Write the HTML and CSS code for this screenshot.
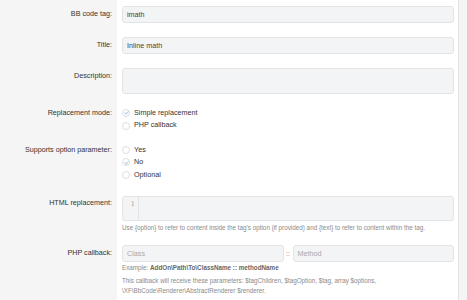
FILE: index.html
```html
<!DOCTYPE html>
<html lang="en">
  <head>
    <meta charset="UTF-8" />
    <title>Edit BB code</title>
    <link rel="stylesheet" href="styles.css">
  </head>
  <body>
    <div class="form">
      <div class="row">
        <div class="label">BB code tag:</div>
        <div class="ctrl"><div class="input">imath</div></div>
      </div>
      <div class="row">
        <div class="label">Title:</div>
        <div class="ctrl"><div class="input">Inline math</div></div>
      </div>
      <div class="row">
        <div class="label">Description:</div>
        <div class="ctrl"><div class="input textarea"></div></div>
      </div>
      <div class="row choices">
        <div class="label">Replacement mode:</div>
        <div class="ctrl">
          <div class="radio checked"><span class="dot"></span>Simple replacement</div>
          <div class="radio"><span class="dot"></span>PHP callback</div>
        </div>
      </div>
      <div class="row choices">
        <div class="label">Supports option parameter:</div>
        <div class="ctrl">
          <div class="radio"><span class="dot"></span>Yes</div>
          <div class="radio checked"><span class="dot"></span>No</div>
          <div class="radio"><span class="dot"></span>Optional</div>
        </div>
      </div>
      <div class="row html">
        <div class="label">HTML replacement:</div>
        <div class="ctrl">
          <div class="code">
            <div class="gutter">1</div>
            <div class="lines"></div>
          </div>
          <div class="hint">Use {option} to refer to content inside the tag's option (if provided) and {text} to refer to content within the tag.</div>
        </div>
      </div>
      <div class="row php">
        <div class="label">PHP callback:</div>
        <div class="ctrl">
          <div class="callback">
            <div class="input placeholder">Class</div>
            <span class="sep">::</span>
            <div class="input placeholder">Method</div>
          </div>
          <div class="hint example">Example: <b>AddOn\Path\To\ClassName :: methodName</b></div>
          <div class="hint params">This callback will receive these parameters: $tagChildren, $tagOption, $tag, array $options, \XF\BbCode\Renderer\AbstractRenderer $renderer.</div>
        </div>
      </div>
    </div>
  </body>
</html>
```

FILE: styles.css
```css
body {
  margin: 0;
  background: #f5f5f5;
  font-family: "Liberation Sans", Arial, sans-serif;
  font-size: 7.2px;
  color: #333;
}
.form {
  width: 458px;
  height: 300px;
  background: #fff;
  border-right: 1px solid #e2e2e2;
}
.row {
  display: flex;
}
.label {
  width: 112px;
  padding: 9px 5px 0 0;
  background: #f5f5f5;
  text-align: right;
  line-height: 10px;
}
.ctrl {
  flex: 1;
  padding: 6px 4px 8px 5px;
}
.input {
  height: 15px;
  line-height: 15px;
  padding: 0 4px;
  background: #f3f4f5;
  border: 1px solid #e3e4e6;
  border-radius: 3px;
  color: #444;
}
.textarea {
  height: 24px;
}
.placeholder {
  color: #a8a8a8;
}
.choices .label {
  padding-top: 6px;
}
.choices .ctrl {
  padding: 4.75px 4px 7px 5px;
}
.radio {
  display: flex;
  align-items: center;
  height: 12.5px;
  line-height: 12.5px;
}
.dot {
  width: 6px;
  height: 6px;
  border: 1px solid #dedede;
  border-radius: 50%;
  margin: 0 4px 0 0;
  position: relative;
}
.radio.checked .dot::after {
  content: "";
  position: absolute;
  left: 1.6px;
  top: 0.4px;
  width: 1.5px;
  height: 3px;
  border: solid #b9cde0;
  border-width: 0 1px 1px 0;
  transform: rotate(40deg);
}
.html .label {
  padding-top: 10px;
}
.html .ctrl {
  padding: 7.5px 4px 6px 5px;
}
.code {
  display: flex;
  height: 23px;
  background: #f3f4f5;
  border: 1px solid #e3e4e6;
  border-radius: 3px;
}
.gutter {
  width: 12px;
  padding: 3px 3px 0 0;
  text-align: right;
  border-right: 1px solid #e3e4e6;
  font-family: "DejaVu Serif", serif;
  font-size: 6.5px;
  color: #999;
}
.lines {
  flex: 1;
}
.hint {
  margin-top: 2px;
  font-size: 6.3px;
  line-height: 9.5px;
  color: #8a8a8a;
}
.hint.example {
  margin-top: 1px;
}
.hint.params {
  margin-top: 3px;
  line-height: 10px;
}
.hint b {
  color: #666;
}
.php .ctrl {
  padding-top: 7px;
}
.php .label {
  padding-top: 10px;
}
.callback {
  display: flex;
  align-items: center;
}
.callback .input {
  flex: 1;
}
.sep {
  width: 9px;
  text-align: center;
  color: #888;
}
```
